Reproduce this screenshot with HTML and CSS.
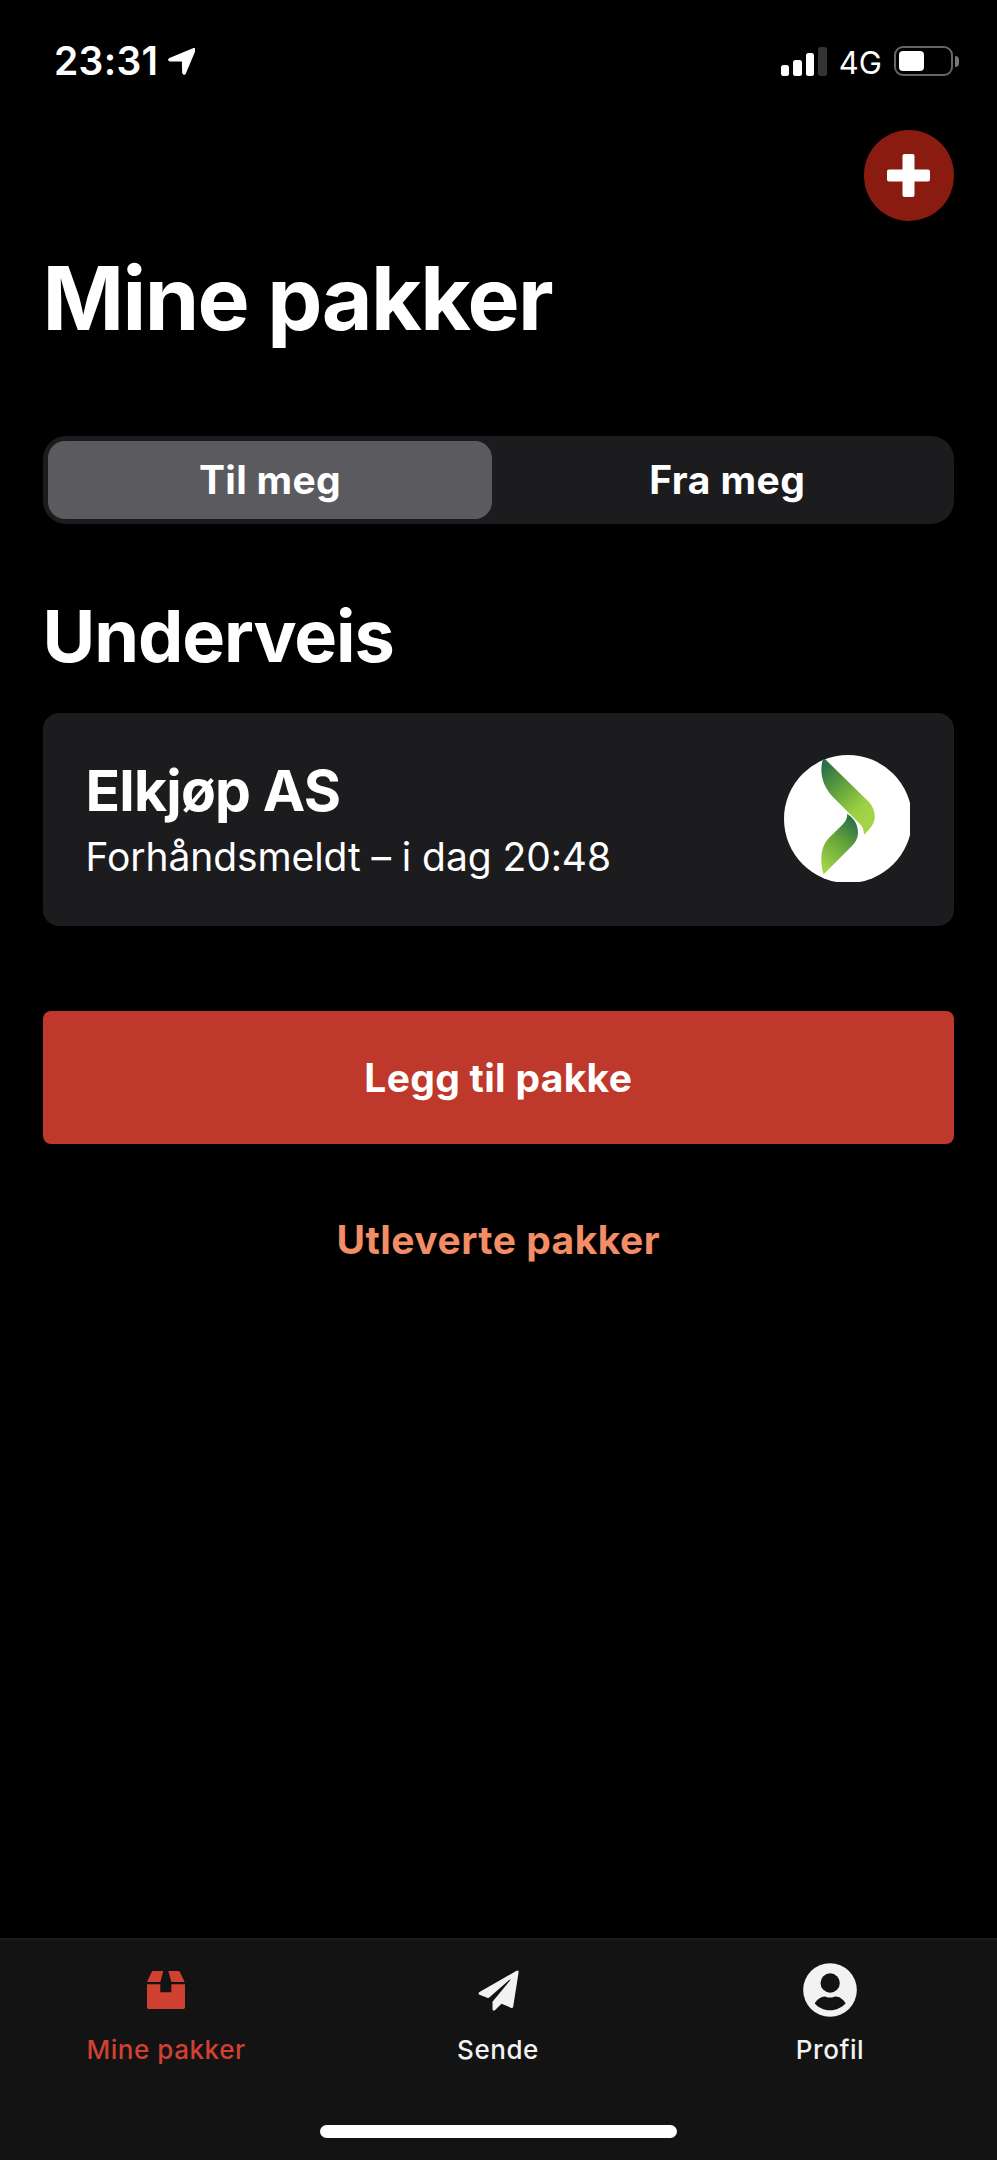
FILE: index.html
```html
<!DOCTYPE html>
<html lang="nb">
<head>
<meta charset="utf-8">
<title>Mine pakker</title>
<link rel="stylesheet" href="styles.css">
</head>
<body>
<div class="screen">
  <header class="status">
    <div class="status-left">
      <span class="clock">23:31</span>
      <svg class="location" viewBox="0 0 78 78"><path d="M71 3 Q79 -1 77 8 L50 72 Q47 79 43 72 L42 38 Q42 36 40 36 L6 37 Q-1 34 5 31 Z" fill="#fff" stroke="#fff" stroke-width="4" stroke-linejoin="round"/></svg>
    </div>
    <div class="status-right">
      <div class="signal"><i class="bar bar-1"></i><i class="bar bar-2"></i><i class="bar bar-3"></i><i class="bar bar-4"></i></div>
      <span class="network">4G</span>
      <div class="battery"><div class="battery-body"><div class="battery-level"></div></div><div class="battery-cap"></div></div>
    </div>
  </header>

  <main class="content">
    <button class="add" aria-label="Legg til">
      <svg viewBox="0 0 43 43"><path d="M17.5 0h8a2 2 0 0 1 2 2v13.5H41a2 2 0 0 1 2 2v8a2 2 0 0 1-2 2H27.500V41a2 2 0 0 1-2 2h-8a2 2 0 0 1-2-2V27.500H2a2 2 0 0 1-2-2v-8a2 2 0 0 1 2-2h13.500V2a2 2 0 0 1 2-2z" fill="#fff"/></svg>
    </button>
    <h1 class="title">Mine pakker</h1>
    <div class="tabs">
      <div class="tab tab-active">Til meg</div>
      <div class="tab">Fra meg</div>
    </div>
    <h2 class="section">Underveis</h2>
    <article class="parcel">
      <div class="parcel-text">
        <h3 class="sender">Elkjøp AS</h3>
        <p class="state">Forhåndsmeldt – i dag 20:48</p>
      </div>
      <svg class="logo" viewBox="72 165 378 381">
        <defs>
          <linearGradient id="upper" gradientUnits="userSpaceOnUse" x1="186" y1="205" x2="325" y2="350">
            <stop offset="0" stop-color="#2b7048"/><stop offset=".42" stop-color="#65a43c"/><stop offset=".8" stop-color="#9bcf42"/><stop offset="1" stop-color="#a2d545"/>
          </linearGradient>
          <linearGradient id="lower" gradientUnits="userSpaceOnUse" x1="288" y1="365" x2="185" y2="495">
            <stop offset="0" stop-color="#2b7048"/><stop offset=".45" stop-color="#64a43a"/><stop offset="1" stop-color="#a0d246"/>
          </linearGradient>
        </defs>
        <circle cx="264" cy="357" r="192" fill="#fff"/>
        <path d="M196 178 L327 306 Q346 327 344 356 Q342 377 312 404 Q312 382 299 371 L218 290 C190 260 178 222 187 183 Q190 174 196 178Z" fill="url(#upper)"/>
        <path d="M262 341 C286 358 295 377 294 402 Q292 422 276 438 L191 523 C179 485 181 440 206 415 L247 374 Q262 360 262 341Z" fill="url(#lower)"/>
      </svg>
    </article>
    <button class="primary">Legg til pakke</button>
    <a class="link">Utleverte pakker</a>
  </main>

  <nav class="nav">
    <div class="nav-items">
      <div class="nav-item nav-active">
        <div class="nav-icon"><svg width="38" height="38" viewBox="0 0 114 114"><path d="M18 0H49L40 33H0L14 3Q15 0 18 0ZM64 0H94Q97 0 99 4L113 33H73ZM0 40H40V64H73V40H114V109Q114 114 109 114H5Q0 114 0 109Z" fill="#d04132"/></svg></div>
        <span class="nav-label">Mine pakker</span>
      </div>
      <div class="nav-item">
        <div class="nav-icon nav-icon-plane"><svg width="41" height="41" viewBox="143 136 122 123"><path d="M257 139 Q266 134 264 145 L248 246 Q247 252 241 249 L213 237 L194 256 Q187 261 186 253 L186 231 L239 167 Q241 163 237 165 L177 218 Q174 221 170 219 L147 210 Q141 206 147 202Z" fill="#f2f2f2"/></svg></div>
        <span class="nav-label">Sende</span>
      </div>
      <div class="nav-item">
        <div class="nav-icon"><svg width="54" height="54" viewBox="100 113 162 162"><circle cx="181" cy="194" r="80.500" fill="#f2f2f2"/><circle cx="181.500" cy="173" r="29" fill="#131313"/><path d="M135 234 C145 219 158 212 168 214 Q181 219 194 214 C205 211 220 220 228 234 C217 247 200 255 181 255 S145 247 135 234Z" fill="#131313"/></svg></div>
        <span class="nav-label">Profil</span>
      </div>
    </div>
    <div class="home-bar"></div>
  </nav>
</div>
</body>
</html>
```
FILE: styles.css
```css
* { box-sizing: border-box; }

body {
  margin: 0;
  background: #000;
  color: #fff;
  font-family: Inter, "Liberation Sans", sans-serif;
}

h1, h2, h3, p { margin: 0; }
button { border: 0; padding: 0; color: inherit; font-family: inherit; }
svg { display: block; }

.screen {
  width: 997px;
  height: 2160px;
  display: flex;
  flex-direction: column;
}

/* Status bar */
.status {
  height: 130px;
  padding: 0 38px 0 54px;
  display: flex;
  justify-content: space-between;
}
.status-left, .status-right { display: flex; align-items: center; height: 122px; }
.clock { font-size: 39px; font-weight: 600; line-height: 40px; letter-spacing: .29px; }
.location { width: 27px; height: 27px; margin-left: 10px; }
.signal { display: flex; align-items: flex-end; gap: 4px; height: 29px; margin-right: 12px; }
.bar { width: 8.500px; border-radius: 2.500px; background: #fff; }
.bar-1 { height: 11px; }
.bar-2 { height: 16px; }
.bar-3 { height: 23px; }
.bar-4 { height: 28.500px; background: #333; }
.network { font-size: 31px; line-height: 32px; padding-top: 3px; margin-right: 12px; }
.battery { display: flex; align-items: center; gap: 2px; }
.battery-body { width: 59px; height: 30px; padding: 3px; border: 2px solid #666; border-radius: 9px; }
.battery-level { width: 25px; height: 20px; border-radius: 4px; background: #fff; }
.battery-cap { width: 4px; height: 11px; border-radius: 0 5px 5px 0; background: #777; }

/* Content */
.content {
  flex: 1;
  padding: 0 43px 0 42.500px;
  display: flex;
  flex-direction: column;
}
.add {
  align-self: flex-end;
  width: 90.500px;
  height: 90.500px;
  border-radius: 50%;
  background: #8a1b11;
  display: grid;
  place-items: center;
}
.add svg { width: 43px; height: 43px; }
.title { margin-top: 33.500px; font-size: 87.600px; line-height: 88px; letter-spacing: -1.600px; }
.tabs {
  margin-top: 94px;
  height: 88px;
  padding: 5px;
  display: grid;
  grid-template-columns: 444px 1fr;
  gap: 10px;
  border-radius: 23px;
  background: #1c1c1e;
}
.tab {
  display: grid;
  place-items: center;
  padding-left: 4px;
  border-radius: 17px;
  font-size: 39px;
  font-weight: 700;
  line-height: 40px;
  letter-spacing: .450px;
}
.tab-active { padding-left: 1px; background: #5b5a5f; letter-spacing: .300px; }
.section { margin-top: 76px; font-size: 72px; font-weight: 700; line-height: 72px; letter-spacing: -1.060px; }
.parcel {
  margin-top: 41px;
  height: 213px;
  padding: 0 44px 0 43px;
  display: flex;
  align-items: center;
  justify-content: space-between;
  border-radius: 16px;
  background: #1c1c1e;
}
.sender { font-size: 57px; line-height: 60px; letter-spacing: -.800px; }
.state { margin-top: 12px; font-size: 39px; line-height: 48px; letter-spacing: -.080px; }
.parcel-text { padding-top: 2px; }
.logo { width: 126px; height: 127px; margin-bottom: 2px; }
.primary {
  margin-top: 85px;
  height: 132.500px;
  border-radius: 8px;
  background: #be382b;
  font-size: 39px;
  font-weight: 700;
  letter-spacing: .300px;
}
.link {
  margin-top: 72px;
  color: #f28d66;
  font-size: 39px;
  font-weight: 700;
  line-height: 48px;
  letter-spacing: .480px;
  text-align: center;
}

/* Bottom navigation */
.nav {
  height: 222px;
  border-top: 2px solid #1b1b1b;
  background: #131313;
  display: flex;
  flex-direction: column;
  align-items: center;
}
.nav-items { width: 100%; height: 185px; padding-right: 1px; display: grid; grid-template-columns: repeat(3, 1fr); }
.nav-item { display: flex; flex-direction: column; align-items: center; color: #f2f2f2; }
.nav-active { color: #d04132; }
.nav-icon { height: 54px; margin-top: 22.500px; display: grid; place-items: center; }
.nav-icon-plane { padding-top: 1px; }
.nav-label { margin-top: 17.500px; font-size: 26px; font-weight: 500; line-height: 32px; letter-spacing: .560px; }
.home-bar { width: 357px; height: 13px; border-radius: 7px; background: #fff; }
```
